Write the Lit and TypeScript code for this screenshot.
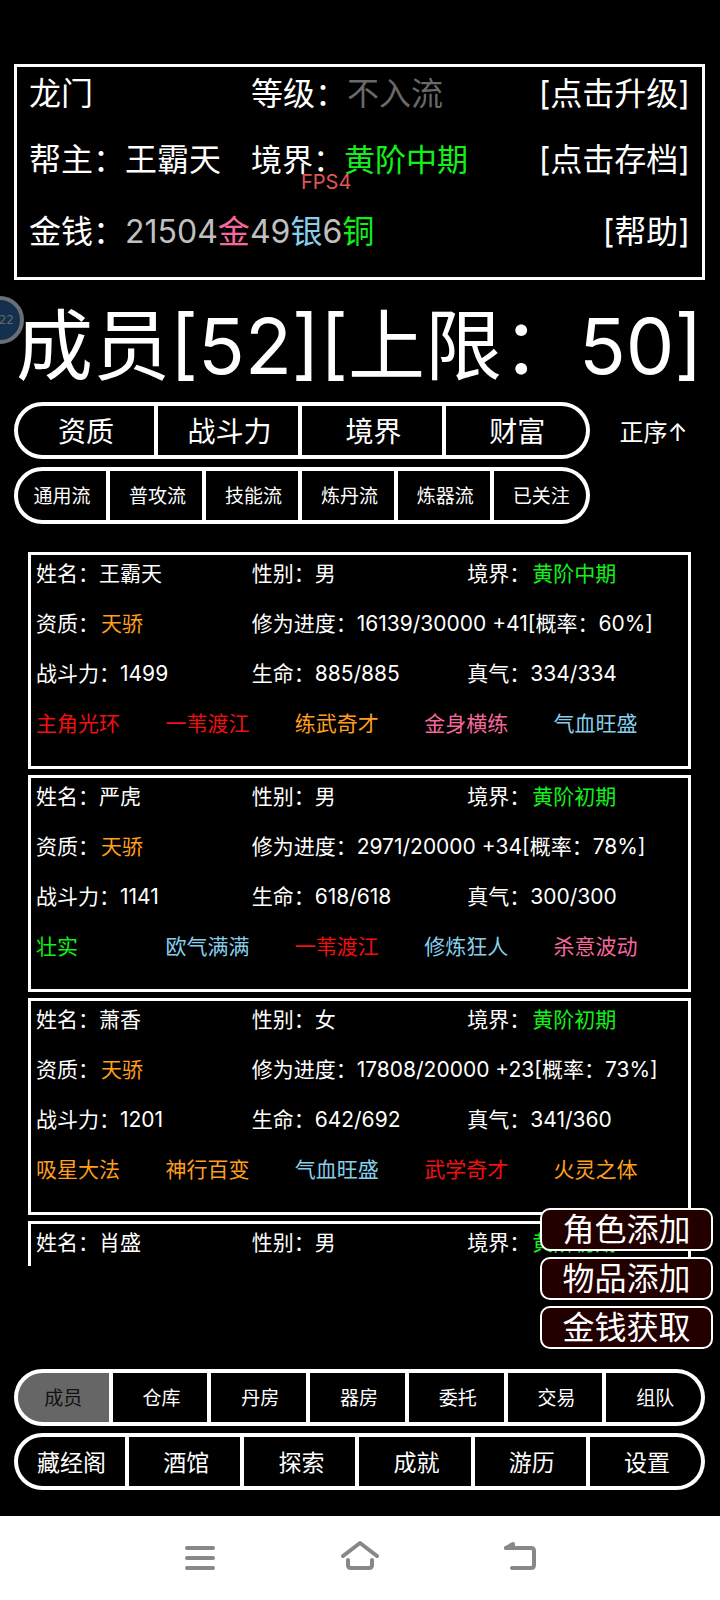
import { LitElement, html, css, svg } from "lit";
import { customElement, property, state } from "lit/decorators.js";
import { classMap } from "lit/directives/class-map.js";

type Tone = "red" | "orange" | "pink" | "blue" | "green";

interface Skill {
  name: string;
  tone: Tone;
}

interface Member {
  name: string;
  gender: string;
  realm: string;
  talent: string;
  progress: string;
  power: number;
  life: string;
  energy: string;
  skills: Skill[];
}

const skill = (name: string, tone: Tone): Skill => ({ name, tone });

const MEMBERS: Member[] = [
  {
    name: "王霸天", gender: "男", realm: "黄阶中期", talent: "天骄",
    progress: "16139/30000 +41[概率：60%]", power: 1499, life: "885/885", energy: "334/334",
    skills: [skill("主角光环", "red"), skill("一苇渡江", "red"), skill("练武奇才", "orange"), skill("金身横练", "pink"), skill("气血旺盛", "blue")],
  },
  {
    name: "严虎", gender: "男", realm: "黄阶初期", talent: "天骄",
    progress: "2971/20000 +34[概率：78%]", power: 1141, life: "618/618", energy: "300/300",
    skills: [skill("壮实", "green"), skill("欧气满满", "blue"), skill("一苇渡江", "red"), skill("修炼狂人", "blue"), skill("杀意波动", "pink")],
  },
  {
    name: "萧香", gender: "女", realm: "黄阶初期", talent: "天骄",
    progress: "17808/20000 +23[概率：73%]", power: 1201, life: "642/692", energy: "341/360",
    skills: [skill("吸星大法", "orange"), skill("神行百变", "orange"), skill("气血旺盛", "blue"), skill("武学奇才", "red"), skill("火灵之体", "orange")],
  },
  {
    name: "肖盛", gender: "男", realm: "黄阶初期", talent: "天骄",
    progress: "", power: 0, life: "", energy: "", skills: [],
  },
];

const tones = css`
  .red { color: #f01010; }
  .orange { color: #ff9f1c; }
  .pink { color: #f5689b; }
  .blue { color: #87ceeb; }
  .green { color: #12f01c; }
`;

@customElement("pill-bar")
export class PillBar extends LitElement {
  @property({ type: Array }) items: string[] = [];
  @property() selected = "";
  @property() size = "small";
  @property() label = "";

  static styles = css`
    :host { display: block; }
    .bar { display: grid; grid-auto-flow: column; grid-auto-columns: minmax(0, 1fr); }
    .cell {
      box-sizing: border-box;
      height: 57px;
      margin: 0;
      padding: 0 0 2px 3px;
      border: 4px solid #fff;
      border-left-width: 0;
      background: #000;
      color: #fff;
      font-family: inherit;
      white-space: nowrap;
    }
    .cell:first-child { border-left-width: 4px; border-radius: 29px 0 0 29px; padding: 0 0 2px; }
    .cell:last-child { border-radius: 0 29px 29px 0; }
    .small .cell { font-size: 19px; }
    .medium .cell { font-size: 23px; }
    .large .cell { font-size: 28px; }
    .cell.on { background: #666; color: #111; }
  `;

  private pick(item: string) {
    this.dispatchEvent(new CustomEvent("pick", { detail: item }));
  }

  render() {
    return html`<nav class="bar ${this.size}" aria-label=${this.label}>
      ${this.items.map((item) => html`<button
        class=${classMap({ cell: true, on: item === this.selected })}
        @click=${() => this.pick(item)}>${item}</button>`)}
    </nav>`;
  }
}

@customElement("member-card")
export class MemberCard extends LitElement {
  @property({ type: Object }) member!: Member;

  static styles = [tones, css`
    :host { display: block; }
    .card {
      display: flex;
      flex-direction: column;
      gap: 20px;
      box-sizing: border-box;
      min-height: 217px;
      padding: 4px 5px;
      border: 3px solid #fff;
      font-size: 21px;
      line-height: 30px;
      white-space: nowrap;
    }
    .row { display: grid; grid-template-columns: repeat(3, minmax(0, 1fr)); }
    .value { margin-left: 2px; }
    .wide { grid-column: span 2; }
    .skills { display: grid; grid-template-columns: repeat(5, minmax(0, 1fr)); }
  `];

  render() {
    const m = this.member;
    return html`<article class="card">
      <div class="row">
        <span>姓名：${m.name}</span>
        <span>性别：${m.gender}</span>
        <span>境界：<span class="value green">${m.realm}</span></span>
      </div>
      <div class="row">
        <span>资质：<span class="value orange">${m.talent}</span></span>
        <span class="wide">修为进度：${m.progress}</span>
      </div>
      <div class="row">
        <span>战斗力：${m.power}</span>
        <span>生命：${m.life}</span>
        <span>真气：${m.energy}</span>
      </div>
      <div class="skills">
        ${m.skills.map((s) => html`<span class=${s.tone}>${s.name}</span>`)}
      </div>
    </article>`;
  }
}

@customElement("app-root")
export class AppRoot extends LitElement {
  @state() private tab = "成员";
  @state() private ascending = true;

  static styles = [tones, css`
    :host {
      display: flex;
      flex-direction: column;
      height: 100vh;
      background: #000;
      color: #fff;
      font-family: Inter, "Noto Sans CJK SC", sans-serif;
    }
    button { margin: 0; padding: 0; border: 0; background: none; color: inherit; font: inherit; white-space: nowrap; }
    .game {
      position: relative;
      flex: 1;
      min-height: 0;
      display: flex;
      flex-direction: column;
      padding: 64px 15px 26px 14px;
    }
    .status {
      display: grid;
      grid-template-columns: 222px 1fr auto;
      grid-template-rows: 66px 66px 66px;
      padding: 0 12px 12px;
      border: 3px solid #fff;
      font-size: 32px;
      line-height: 40px;
      white-space: nowrap;
    }
    .status > * { align-self: start; margin-top: 7px; }
    .status > .last { margin-top: 13px; }
    .status button { text-align: right; }
    .realm { font-size: 31px; }
    .money { grid-column: span 2; }
    .count { color: #c0c0c0; }
    .dim { color: #696969; }
    .title { margin: 14px 0 0; padding-left: 2px; font-size: 77px; line-height: 104px; font-weight: 400; white-space: nowrap; }
    .filters {
      display: grid;
      grid-template-columns: 5fr 1fr;
      gap: 8px 0;
      margin-top: 4px;
    }
    .sort { padding-left: 12px; font-size: 24px; }
    .list {
      flex: 1;
      min-height: 0;
      display: flex;
      flex-direction: column;
      gap: 6px;
      margin: 28px 14px 0;
      overflow-y: auto;
      scrollbar-width: none;
    }
    .list > * { flex: none; }
    .menus { display: grid; gap: 7px; margin-top: 103px; }
    .cheats { position: absolute; right: 7px; bottom: 167px; display: grid; gap: 6px; }
    .cheats button {
      box-sizing: border-box;
      width: 173px;
      height: 43px;
      border: 2px solid #fff;
      border-radius: 10px;
      background: #230000;
      font-size: 32px;
      line-height: 38px;
    }
    .fps { position: absolute; left: 301px; top: 167px; color: #e05555; font-size: 20px; line-height: 30px; }
    .bubble {
      position: absolute;
      left: -24px;
      top: 296px;
      box-sizing: border-box;
      width: 48px;
      height: 48px;
      padding-right: 6px;
      border: 4px solid #6a6f75;
      border-radius: 50%;
      background: #15304e;
      color: #62676c;
      font: 12px/40px "DejaVu Sans", sans-serif;
      text-align: right;
    }
    .system {
      display: flex;
      justify-content: center;
      align-items: center;
      gap: 112px;
      height: 84px;
      background: #fff;
    }
    .system svg { display: block; width: 48px; height: 48px; fill: none; stroke: #888; stroke-width: 4; stroke-linecap: round; stroke-linejoin: round; }
  `];

  private icon(shape: unknown) {
    return html`<svg viewBox="0 0 48 48" aria-hidden="true">${shape}</svg>`;
  }

  render() {
    const pick = (e: CustomEvent<string>) => (this.tab = e.detail);
    return html`
      <main class="game">
        <span class="bubble">22</span>
        <header class="status">
          <span>龙门</span>
          <span>等级：<span class="dim">不入流</span></span>
          <button>[点击升级]</button>
          <span>帮主：王霸天</span>
          <span class="realm">境界：<span class="green">黄阶中期</span></span>
          <button>[点击存档]</button>
          <span class="money last">金钱：<span class="count">21504</span><span class="pink">金</span><span class="count">49</span><span class="blue">银</span><span class="count">6</span><span class="green">铜</span></span>
          <button class="last">[帮助]</button>
        </header>
        <h1 class="title">成员[52][上限：50]</h1>
        <section class="filters">
          <pill-bar size="large" label="排序" .items=${["资质", "战斗力", "境界", "财富"]}></pill-bar>
          <button class="sort" @click=${() => (this.ascending = !this.ascending)}>${this.ascending ? "正序↑" : "倒序↓"}</button>
          <pill-bar label="筛选" .items=${["通用流", "普攻流", "技能流", "炼丹流", "炼器流", "已关注"]}></pill-bar>
        </section>
        <section class="list">
          ${MEMBERS.map((m) => html`<member-card .member=${m}></member-card>`)}
        </section>
        <section class="menus">
          <pill-bar label="主菜单" .selected=${this.tab} @pick=${pick} .items=${["成员", "仓库", "丹房", "器房", "委托", "交易", "组队"]}></pill-bar>
          <pill-bar size="medium" label="更多" .selected=${this.tab} @pick=${pick} .items=${["藏经阁", "酒馆", "探索", "成就", "游历", "设置"]}></pill-bar>
        </section>
        <div class="cheats">
          <button>角色添加</button>
          <button>物品添加</button>
          <button>金钱获取</button>
        </div>
        <span class="fps">FPS4</span>
      </main>
      <footer class="system">
        <button aria-label="菜单">${this.icon(svg`<path d="M11 14H37M11 24H37M11 34H37"/>`)}</button>
        <button aria-label="主页">${this.icon(svg`<path d="M7 22L24 9L41 22M12 26v5q0 3 3 3h18q3 0 3-3v-5"/>`)}</button>
        <button aria-label="返回">${this.icon(svg`<path d="M10 14h25q3 0 3 3v14q0 3-3 3H16"/><path d="M10 14L17 10V14z" fill="#888"/>`)}</button>
      </footer>
    `;
  }
}
